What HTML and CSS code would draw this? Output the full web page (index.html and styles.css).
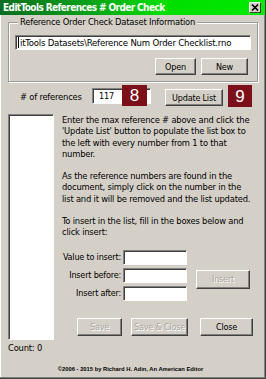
FILE: index.html
```html
<!DOCTYPE html>
<html>
<head>
<meta charset="utf-8">
<link rel="stylesheet" href="styles.css">
</head>
<body>
<div class="win">
  <div class="title">
    <span class="title-text">EditTools References # Order Check</span>
    <span class="close"><svg width="8" height="7" viewBox="0 0 8 7"><path d="M1 0.5 L7 6.5 M7 0.5 L1 6.5" stroke="#000" stroke-width="1.6"/></svg></span>
  </div>

  <div class="group">
    <span class="legend">Reference Order Check Dataset Information</span>
    <div class="path-input"><span class="caret"></span>itTools Datasets\Reference Num Order Checklist.rno</div>
    <div class="group-buttons">
      <span class="btn btn-open">Open</span>
      <span class="btn btn-new">New</span>
    </div>
  </div>

  <div class="refs-row">
    <span class="refs-label"># of references</span>
    <span class="refs-wrap">
      <span class="input refs-input">117</span>
      <span class="badge badge-8">8</span>
    </span>
    <span class="btn btn-update">Update List</span>
    <span class="badge badge-9">9</span>
  </div>

  <div class="main">
    <div class="left-col">
      <div class="listbox"></div>
      <div class="count">Count: 0</div>
    </div>
    <div class="right-col">
      <p>Enter the max reference # above and click the 'Update List' button to populate the list box to the left with every number from 1 to that number.</p>
      <p>As the reference numbers are found in the document, simply click on the number in the<br>list and it will be removed and the list updated.</p>
      <p class="last">To insert in the list, fill in the boxes below and click insert:</p>
      <div class="insert-grid">
        <span class="ins-label">Value to insert:</span>
        <span class="input ins-input"></span>
        <span class="ins-label">Insert before:</span>
        <span class="input ins-input"></span>
        <span class="btn disabled btn-insert">Insert</span>
        <span class="ins-label">Insert after:</span>
        <span class="input ins-input"></span>
      </div>
      <div class="bottom-buttons">
        <span class="btn disabled btn-save">Save</span>
        <span class="btn disabled btn-saveclose">Save &amp; Close</span>
        <span class="btn btn-close">Close</span>
      </div>
    </div>
  </div>

  <div class="footer">©2006 - 2015 by Richard H. Adin, An American Editor</div>
</div>
</body>
</html>
```

FILE: styles.css
```css
html, body {
  margin: 0;
  padding: 0;
  background: #d4d0c8;
}

body {
  font-family: "DejaVu Sans Condensed", "DejaVu Sans", "Liberation Sans", sans-serif;
  font-size: 9.3px;
  letter-spacing: -0.2px;
  color: #000;
}

.win {
  width: 266px;
  height: 379px;
  box-sizing: border-box;
  border-right: 1px solid #404040;
  border-bottom: 1px solid #404040;
  box-shadow: inset -1px -1px 0 #808080, inset 1px 0 0 #ffffff;
  overflow: hidden;
}

.title {
  height: 15px;
  display: flex;
  align-items: center;
  padding-left: 3px;
  background: linear-gradient(to right, #0b6e22 0%, #08a318 35%, #00dd00 60%, #00ea00 100%);
  color: #fff;
  font-weight: bold;
  font-size: 10px;
  letter-spacing: -0.6px;
}

.close {
  margin-left: auto;
  margin-right: 4px;
  width: 10px;
  height: 9px;
  background: #d4d0c8;
  border: 1px solid;
  border-color: #fff #404040 #404040 #fff;
  display: flex;
  align-items: center;
  justify-content: center;
}

.group {
  position: relative;
  margin: 7px 7px 0 8px;
  height: 60px;
  box-sizing: border-box;
  border: 1px solid #9a9a9a;
  box-shadow: 1px 1px 0 #fff, inset 1px 1px 0 #fff;
  padding: 12px 7px 0 6px;
}

.legend {
  position: absolute;
  top: -7px;
  left: 9px;
  background: #d4d0c8;
  padding: 0 2px;
  line-height: 12px;
}

.path-input {
  height: 15px;
  width: 236px;
  box-sizing: border-box;
  background: #fff;
  border: 1px solid;
  border-color: #808080 #fff #fff #808080;
  box-shadow: inset 1px 1px 0 #404040;
  padding-left: 2px;
  line-height: 13px;
  font-size: 9.5px;
  white-space: nowrap;
  overflow: hidden;
  display: flex;
  align-items: center;
}

.caret {
  display: inline-block;
  width: 1px;
  height: 11px;
  background: #000;
  margin-right: 1px;
}

.group-buttons {
  display: flex;
  justify-content: flex-end;
  gap: 5px;
  margin-top: 8px;
  margin-right: 2px;
}

.btn {
  box-sizing: border-box;
  display: inline-flex;
  align-items: center;
  justify-content: center;
  height: 17px;
  background: #d4d0c8;
  border: 1px solid;
  border-color: #fff #404040 #404040 #fff;
  box-shadow: inset -1px -1px 0 #808080;
  font-size: 9px;
  white-space: nowrap;
}

.btn.disabled {
  color: #a8a5a0;
  text-shadow: 1px 1px 0 #fff;
}

.btn-open { width: 41px; }
.btn-new { width: 47px; }

.input {
  box-sizing: border-box;
  background: #fff;
  border: 1px solid;
  border-color: #808080 #fff #fff #808080;
  box-shadow: inset 1px 1px 0 #404040;
}

.refs-row {
  display: flex;
  align-items: center;
  height: 24px;
  margin-top: 2px;
  padding-left: 20px;
}

.refs-label {
  width: 72px;
}

.refs-wrap {
  position: relative;
  display: inline-block;
  width: 59px;
  height: 16px;
}

.refs-input {
  display: flex;
  align-items: center;
  width: 59px;
  height: 16px;
  padding-left: 6px;
  font-size: 9px;
}

.badge {
  display: inline-flex;
  align-items: center;
  justify-content: center;
  background: #7b1019;
  color: #fff;
  font-family: "Liberation Sans", "DejaVu Sans", sans-serif;
  font-size: 17px;
  letter-spacing: 0;
  line-height: 1;
}

.badge-8 {
  position: absolute;
  left: 30px;
  top: -3px;
  width: 25px;
  height: 21px;
}

.btn-update {
  margin-left: 14px;
  width: 58px;
  margin-top: 3px;
}

.badge-9 {
  margin-left: 5px;
  width: 24px;
  height: 22px;
}

.main {
  display: grid;
  grid-template-columns: 46px 1fr;
  column-gap: 8px;
  margin: 6px 0 0 8px;
}

.listbox {
  height: 226px;
  box-sizing: border-box;
  background: #fff;
  border: 1px solid;
  border-color: #808080 #fff #fff #808080;
  box-shadow: inset 1px 1px 0 #404040;
}

.count {
  margin-top: 2px;
  line-height: 12px;
}

.right-col p {
  margin: 0 0 11px 0;
  line-height: 11.3px;
  width: 194px;
}

.right-col p.last {
  margin-bottom: 12px;
}

.insert-grid {
  display: grid;
  grid-template-columns: 59px 64px 54px;
  grid-auto-rows: 15px;
  column-gap: 2px;
  row-gap: 3px;
  align-items: center;
}

.ins-label {
  grid-column: 1;
  text-align: right;
  font-size: 9px;
  white-space: nowrap;
}

.ins-input {
  grid-column: 2;
  height: 15px;
}

.btn-insert {
  grid-column: 3;
  grid-row: 2 / span 2;
  align-self: start;
  margin-left: 7px;
  margin-top: 2px;
  height: 19px;
  width: 54px;
}

.bottom-buttons {
  display: flex;
  margin: 17px 0 0 15px;
  height: 18px;
}

.bottom-buttons .btn {
  height: 18px;
}

.btn-save { width: 45px; }
.btn-saveclose { width: 57px; margin-left: 9px; }
.btn-close { width: 53px; margin-left: 12px; }

.footer {
  text-align: center;
  font-family: "Liberation Sans", sans-serif;
  font-weight: bold;
  font-size: 5.8px;
  letter-spacing: 0;
  margin-top: 12px;
  padding-right: 4px;
}
```
